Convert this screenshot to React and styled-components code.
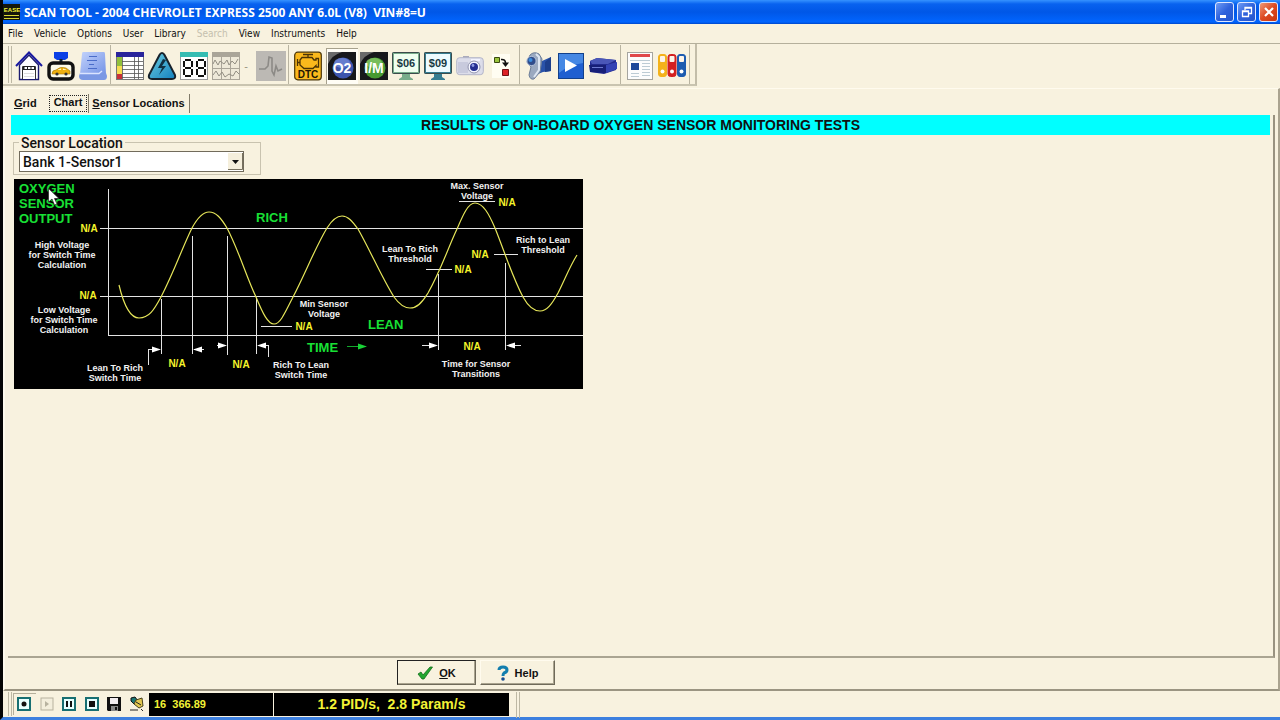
import styled, { createGlobalStyle } from "styled-components";

const menus = ["File", "Vehicle", "Options", "User", "Library", "Search", "View", "Instruments", "Help"];

const HouseIcon = () => (
  <svg width="28" height="30" viewBox="0 0 28 30">
    <path d="M4.5 14V28.5H23.5V14L14 4Z" fill="#fff" stroke="#1c1c70" strokeWidth="1.4" />
    <path d="M1 15L14 1.5L27 15" fill="none" stroke="#1a1aa0" strokeWidth="2" />
    <path d="M7.5 28V15.5H20.5V28" fill="#fff" stroke="#333" />
    <path d="M8 15H20V19H8Z" fill="#222" />
    <path d="M9.5 16H12V18H9.5ZM13 16H15.5V18H13ZM16.5 16H19V18H16.5Z" fill="#fff" />
    <path d="M9 22.5H19M9 25.5H19" stroke="#ddd" />
  </svg>
);

const VehicleIcon = () => (
  <svg width="28" height="30" viewBox="0 0 28 30">
    <path d="M7 1H21V7L18 9H10L7 7Z" fill="#0a3fe6" />
    <path d="M14 8V12" stroke="#123" strokeWidth="3" />
    <rect x="2" y="12" width="24" height="16" rx="4" fill="#fdfbea" stroke="#111" strokeWidth="3.4" />
    <path d="M5 23Q5 19 9 19Q13 15 19 17L23 20V23Z" fill="#eeb010" stroke="#a07000" strokeWidth="0.6" />
    <path d="M11 18.5L14 17.4V19H11M16 17.4L19 18.5V19H16Z" fill="#fff5c0" />
    <circle cx="10" cy="23" r="1.6" fill="#333" />
    <circle cx="19" cy="23" r="1.6" fill="#333" />
  </svg>
);

const NotesIcon = () => (
  <svg width="28" height="30" viewBox="0 0 28 30">
    <defs>
      <linearGradient id="notes" x1="0" y1="0" x2="1" y2="1">
        <stop offset="0" stopColor="#c3d3fb" />
        <stop offset="1" stopColor="#7593e6" />
      </linearGradient>
    </defs>
    <path d="M4 1H25Q26 1 26 3L27 23H1L3 3Q3 1 4 1Z" fill="url(#notes)" />
    <path d="M1 22H27L28 25Q28 29 25 29H4Q0 29 0 25Z" fill="#7b98e4" />
    <path d="M1 22.5H20L23 20" fill="none" stroke="#dbe4ff" strokeWidth="1.4" />
    <path d="M10 5.5H18M8 9.5H18M10 13.5H15M9 17.5H18" stroke="#4a6cc9" />
  </svg>
);

const TableIcon = () => (
  <svg width="28" height="28" viewBox="0 0 28 28">
    <path d="M0 0H28V28H0Z" fill="#fff" />
    <path d="M0 5H6V14H0Z" fill="#91c03c" />
    <path d="M0 14H6V22H0Z" fill="#f5dc51" />
    <path d="M0 22H6V28H0Z" fill="#c83138" />
    <path d="M6.5 5V28M18.5 5V28M22.5 5V28M6 9.5H28M6 13.5H28M6 17.5H28M6 21.5H28M6 25.5H28" stroke="#555" strokeWidth="0.8" />
    <rect x="0.5" y="0.5" width="27" height="27" fill="none" stroke="#777" />
    <path d="M0 0H28V5H0Z" fill="#29249b" />
  </svg>
);

const PowerIcon = () => (
  <svg width="30" height="30" viewBox="0 0 30 30">
    <defs>
      <linearGradient id="power" x1="0" y1="0" x2="1" y2="1">
        <stop offset="0" stopColor="#6dcde0" />
        <stop offset="1" stopColor="#1380bd" />
      </linearGradient>
    </defs>
    <path d="M15 2Q16.5 2 17.5 4L28 24Q29 28 25 28H5Q1 28 2 24L12.5 4Q13.5 2 15 2Z" fill="url(#power)" stroke="#17222c" strokeWidth="2" />
    <path d="M16 8L11 17H15L12 24L19 15H15L19 9Z" fill="#102f42" />
  </svg>
);

const DigitsIcon = () => (
  <svg width="28" height="28" viewBox="0 0 28 28">
    <rect x="0.5" y="0.5" width="27" height="27" fill="#fff" stroke="#999" />
    <path d="M0 0H28V5H0Z" fill="#35bcb2" />
    <g fill="none" stroke="#111" strokeWidth="2">
      <path d="M5 8H11M5 16H11M5 24H11M4 9V15M12 9V15M4 17V23M12 17V23" />
      <path d="M18 8H24M18 16H24M18 24H24M17 9V15M25 9V15M17 17V23M25 17V23" />
    </g>
  </svg>
);

const GraphsIcon = () => (
  <svg width="28" height="28" viewBox="0 0 28 28">
    <rect x="0.5" y="0.5" width="27" height="27" fill="#eee9d9" stroke="#aaa599" />
    <path d="M0 0H28V5H0Z" fill="#aaa599" />
    <path d="M9.5 4V28M18.5 4V28M0 16.5H28" stroke="#aaa599" />
    <path d="M1 12L3 8L6 13L8 9L12 12L15 8L17 13L20 9L23 12L26 7M1 23L4 19L7 24L10 20L13 25L17 22L21 24L24 19L27 22" fill="none" stroke="#928e83" />
  </svg>
);

const PulseIcon = () => (
  <svg width="30" height="30" viewBox="0 0 30 30">
    <path d="M0 0H30V30H0Z" fill="#bcb9b4" />
    <path d="M3 18H9L12 15L13 6L16 7V20L18 24L20 15L22 20L26 18" fill="none" stroke="#8c8a86" strokeWidth="1.6" />
  </svg>
);

const DtcIcon = () => (
  <svg width="28" height="30" viewBox="0 0 28 30">
    <rect x="0.7" y="1.2" width="26.6" height="27.6" rx="3" fill="#fbb91c" stroke="#493407" strokeWidth="1.2" />
    <path d="M9 3.5H19M14 3.5V6M3.5 8V15M3.5 11.5H6M8 6.5H18L20 9H22V7.5H24.5V16H22V14.5L19 17.5H10L6 14V9Z" fill="none" stroke="#4b3305" strokeWidth="1.3" />
    <text x="14" y="27" textAnchor="middle" fontFamily="Liberation Sans, sans-serif" fontWeight="700" fontSize="10" fill="#201505">DTC</text>
  </svg>
);

const BadgeIcon = ({ label, color, light }) => (
  <svg width="28" height="28" viewBox="0 0 28 28">
    <path d="M0 0H28V28H0Z" fill="#17181b" />
    <path d="M0 0H14Q4 3 0 12Z" fill="#6a6a6a" />
    <circle cx="15" cy="16" r="10.5" fill={color} />
    <ellipse cx="14" cy="11" rx="8" ry="5" fill={light} opacity="0.5" />
    <text x="14" y="21" textAnchor="middle" fontFamily="Liberation Sans, sans-serif" fontWeight="700" fontSize="14" fill="#fff">{label}</text>
  </svg>
);

const MonitorIcon = ({ label, color, screen }) => (
  <svg width="28" height="28" viewBox="0 0 28 28">
    <path d="M10 22H18V25L21 27V28H7V27L10 25Z" fill={color} />
    <rect x="1" y="1" width="26" height="20" rx="1" fill={screen} stroke={color} strokeWidth="2" />
    <rect x="0.5" y="0.5" width="27" height="21" rx="1" fill="none" stroke="#3b4c4c" />
    <text x="14" y="15" textAnchor="middle" fontFamily="Liberation Sans, sans-serif" fontWeight="700" fontSize="11" fill="#183943">{label}</text>
  </svg>
);

const CameraIcon = () => (
  <svg width="28" height="28" viewBox="0 0 28 28">
    <path d="M7 6V4H13V6" fill="#aab" />
    <rect x="0.7" y="5.7" width="26.6" height="17" rx="3" fill="#dcddea" stroke="#b3b5c8" />
    <path d="M2 10H12V21H2Z" fill="#c8cadd" />
    <path d="M15 7H24V9H15Z" fill="#f3f4ff" />
    <circle cx="18" cy="15" r="6" fill="#f5f6ff" stroke="#9294ae" />
    <circle cx="18" cy="15" r="4" fill="#252f91" />
    <circle cx="17" cy="13.5" r="1.4" fill="#8e9be4" />
  </svg>
);

const FlowIcon = () => (
  <svg width="28" height="28" viewBox="0 0 28 28">
    <path d="M4 2H22V26H4Z" fill="#fffdf2" />
    <path d="M6.5 5.5H11.5V10.5H6.5Z" fill="#9ac43d" stroke="#3a4a10" />
    <path d="M14.5 17.5H20.5V23.5H14.5Z" fill="#dd2227" stroke="#701216" />
    <path d="M13 7.5Q17.5 7 17.5 11" fill="none" stroke="#111" strokeWidth="1.6" />
    <path d="M14 10.5H21L17.5 15Z" fill="#111" />
  </svg>
);

const VideoIcon = () => (
  <svg width="28" height="28" viewBox="0 0 28 28">
    <path d="M13 8L17 9L26 5V19L18 20L13 22Z" fill="#2952a9" />
    <path d="M26 5L20 10V20L26 19Z" fill="#1d3f8c" />
    <path d="M5 3Q9 -1 14 2L17 7L15 20L9 27Q5 28 4 23L6 15L2 10Z" fill="#9aa9c0" stroke="#6c7d97" />
    <path d="M11 2L14 5V18L9 25" fill="none" stroke="#dde6f2" strokeWidth="2" />
    <circle cx="6.5" cy="9" r="4.6" fill="#304c8a" stroke="#b4c2da" />
    <circle cx="5.5" cy="8" r="2" fill="#3b8ddf" />
  </svg>
);

const PlayIcon = () => (
  <svg width="26" height="26" viewBox="0 0 26 26">
    <rect x="0.5" y="0.5" width="25" height="25" fill="#1f5fd0" stroke="#12408b" />
    <path d="M1 1H25V10Q10 12 1 20Z" fill="#4688e4" />
    <path d="M7 6L19 12.5L7 19Z" fill="#fff" />
  </svg>
);

const DeviceIcon = () => (
  <svg width="30" height="22" viewBox="0 0 30 22">
    <path d="M2 6L9 3L28 5V15L16 19L2 17Z" fill="#232b8e" />
    <path d="M2 6L9 3L28 5L20 9L4 9Z" fill="#4a57b8" />
    <path d="M1 10L18 10V18L2 17Z" fill="#171f77" />
    <path d="M18 10L29 7V14L18 18Z" fill="#3443b4" />
    <path d="M4 12.5H15" stroke="#6c79d0" />
  </svg>
);

const NewsIcon = () => (
  <svg width="28" height="30" viewBox="0 0 28 30">
    <rect x="1.5" y="1.5" width="25" height="27" fill="#fcfcfc" stroke="#a5a5a0" />
    <path d="M4 3H24V6H4Z" fill="#e0484b" />
    <path d="M5 12H13V19H5Z" fill="#1c479a" />
    <path d="M4 9.5H24M16 12.5H24M16 15.5H24M16 18.5H24M5 22.5H13M5 25.5H13M16 21.5H24M16 24.5H24" stroke="#bccbd4" />
  </svg>
);

const BindersIcon = () => (
  <svg width="28" height="28" viewBox="0 0 28 28">
    {["#f4b21b", "#d32021", "#1d5cb0"].map((color, i) => (
      <g key={color} transform={`translate(${i * 9.5} 0)`}>
        <rect x="0.5" y="2.5" width="8" height="22" rx="2.5" fill={color} stroke={color} />
        <rect x="2" y="4" width="5" height="6" rx="1" fill="#fdf4e8" />
        <circle cx="4.5" cy="19.5" r="2" fill="#fff" />
      </g>
    ))}
  </svg>
);

const toolGroups = [
  [
    { name: "Home", icon: <HouseIcon /> },
    { name: "Select vehicle", icon: <VehicleIcon /> },
    { name: "Notes", icon: <NotesIcon /> },
  ],
  [
    { name: "Data grid", icon: <TableIcon /> },
    { name: "Power", icon: <PowerIcon /> },
    { name: "Digital", icon: <DigitsIcon /> },
    { name: "Graphs", icon: <GraphsIcon />, more: true },
    { name: "Pulse", icon: <PulseIcon /> },
  ],
  [
    { name: "Trouble codes", icon: <DtcIcon /> },
    { name: "Oxygen sensors", icon: <BadgeIcon label="O2" color="#3c55ae" light="#8da5ed" />, on: true },
    { name: "Readiness", icon: <BadgeIcon label="I/M" color="#479a31" light="#a8df84" /> },
    { name: "Mode 06", icon: <MonitorIcon label="$06" color="#78ad8b" screen="#effff0" /> },
    { name: "Mode 09", icon: <MonitorIcon label="$09" color="#367d91" screen="#edfbff" /> },
    { name: "Snapshot", icon: <CameraIcon /> },
    { name: "Flow", icon: <FlowIcon /> },
  ],
  [
    { name: "Record movie", icon: <VideoIcon /> },
    { name: "Play movie", icon: <PlayIcon /> },
    { name: "Interface", icon: <DeviceIcon /> },
  ],
  [
    { name: "Report", icon: <NewsIcon /> },
    { name: "Library", icon: <BindersIcon /> },
  ],
];

const recorder = [
  { name: "Record", shape: <circle cx="7" cy="7" r="2.5" />, on: true },
  { name: "Play", shape: <path d="M5 4L9 7L5 10Z" />, off: true },
  { name: "Pause", shape: <path d="M4 4H6V10H4ZM8 4H10V10H8Z" /> },
  { name: "Stop", shape: <path d="M4 4H10V10H4Z" /> },
];

// chart captions: [x centre, first baseline, lines]
const captions = [
  [62, 248, ["High Voltage", "for Switch Time", "Calculation"]],
  [64, 313, ["Low Voltage", "for Switch Time", "Calculation"]],
  [115, 371, ["Lean To Rich", "Switch Time"]],
  [301, 368, ["Rich To Lean", "Switch Time"]],
  [324, 307, ["Min Sensor", "Voltage"]],
  [410, 252, ["Lean To Rich", "Threshold"]],
  [477, 189, ["Max. Sensor", "Voltage"]],
  [543, 243, ["Rich to Lean", "Threshold"]],
  [476, 367, ["Time for Sensor", "Transitions"]],
];

const readings = [
  [89, 232], [88, 299], [177, 367], [241, 368], [304, 330],
  [463, 273], [480, 258], [507, 206], [472, 350],
];

const SensorChart = () => (
  <Chart viewBox="14 179 569 210" role="img" aria-label="Oxygen sensor output">
    <g stroke="#e4e4e4" fill="none" shapeRendering="crispEdges">
      <path d="M108.5 189V335.5H583M100 228.5H583M100 296.5H583" />
      <path d="M161.5 299V354M192.5 236V354M227.5 236V355M256.5 299V354M438.5 274V350M505.5 263V350" />
      <path d="M261 326.5H292M459 201.5H495M426 269.5H452M494 254.5H518" />
      <path d="M148.5 365V349.5H155M194 349.5H204M217 345.5H224M268.5 357V345.5H262M422 345.5H434M510 345.5H521" />
    </g>
    <g fill="#fff">
      <path d="M161 349.5L152 346.5V352.5ZM193 349.5L202 346.5V352.5ZM227 345.5L218 342.5V348.5ZM257 345.5L266 342.5V348.5ZM438 345.5L429 342.5V348.5ZM506 345.5L515 342.5V348.5Z" />
    </g>
    <path
      d="M119 285C124 306 130 318 139 318C149 318 154 310 161 297C174 272 183 246 192 228C198 217 203 212 209 212C216 212 221 218 227 228C239 251 246 276 256 297C263 314 268 324 274 324C280 324 284 315 293 297C305 274 316 246 327 228C332 220 336 216 342 216C348 216 352 221 358 229C371 252 382 278 394 297C399 304 404 308 410 308C417 308 422 303 428 293C441 270 448 248 457 229C463 215 468 203 475 203C483 203 489 214 495 228C505 253 512 276 523 297C528 306 534 311 540 311C547 311 552 304 558 293C565 279 570 266 577 255"
      fill="none"
      stroke="#e6e65a"
      strokeWidth="1.2"
    />
    <path d="M347 346.5H360" stroke="#12a92c" />
    <path d="M367 346.5L358 343.5V349.5Z" fill="#19d237" />
    <Zone>
      <text x="19" y="193">OXYGEN</text>
      <text x="19" y="208">SENSOR</text>
      <text x="19" y="223">OUTPUT</text>
      <text x="256" y="222">RICH</text>
      <text x="368" y="329">LEAN</text>
      <text x="307" y="352">TIME</text>
    </Zone>
    {captions.map(([x, y, lines]) => (
      <Caption key={`${x}-${y}`}>
        {lines.map((line, i) => (
          <text key={line} x={x} y={y + i * 10}>{line}</text>
        ))}
      </Caption>
    ))}
    <Reading>
      {readings.map(([x, y]) => (
        <text key={`${x}-${y}`} x={x} y={y}>N/A</text>
      ))}
    </Reading>
  </Chart>
);

const App = () => (
  <>
    <GlobalStyle />
    <Window>
      <TitleBar>
        <svg width="18" height="18" viewBox="0 0 18 18">
          <path d="M0 1H17V17H0Z" fill="#15170c" />
          <text x="9" y="9" textAnchor="middle" fontFamily="Liberation Sans, sans-serif" fontWeight="700" fontSize="6" fill="#f4f43b">EASE</text>
          <path d="M1 12.5H16M1 15.5H16" stroke="#d8d832" />
        </svg>
        <Title>SCAN TOOL - 2004 CHEVROLET EXPRESS 2500 ANY 6.0L (V8)&nbsp; VIN#8=U</Title>
        <WindowButton aria-label="Minimize">
          <svg width="18" height="18"><path d="M4 12H10V15H4Z" fill="#fff" /></svg>
        </WindowButton>
        <WindowButton aria-label="Restore">
          <svg width="18" height="18"><path d="M7 7V4.5H13.5V10.5H11M4.5 8H10.5V13.5H4.5ZM4 8.5H11M7 5H14" fill="none" stroke="#fff" strokeWidth="1.3" /></svg>
        </WindowButton>
        <WindowButton $close aria-label="Close">
          <svg width="18" height="18"><path d="M5 5L13 13M13 5L5 13" stroke="#fff" strokeWidth="2.2" /></svg>
        </WindowButton>
      </TitleBar>
      <MenuBar>
        {menus.map((menu) => (
          <MenuItem key={menu} disabled={menu === "Search"}>{menu}</MenuItem>
        ))}
      </MenuBar>
      <ToolBar>
        <Grip />
        {toolGroups.map((group, i) => (
          <ToolGroup key={i}>
            {group.map((tool) => (
              <ToolSlot key={tool.name}>
                <ToolButton aria-label={tool.name} $on={tool.on}>{tool.icon}</ToolButton>
                {tool.more && <MoreButton aria-label="More graphs">-</MoreButton>}
              </ToolSlot>
            ))}
          </ToolGroup>
        ))}
      </ToolBar>
      <Workspace>
        <Tabs role="tablist">
          <Tab role="tab"><u>G</u>rid</Tab>
          <Tab role="tab" $active aria-selected="true"><span>Chart</span></Tab>
          <Tab role="tab" $edge><u>S</u>ensor Locations</Tab>
        </Tabs>
        <TabPage>
          <Heading>RESULTS OF ON-BOARD OXYGEN SENSOR MONITORING TESTS</Heading>
          <Location>
            <LocationLabel htmlFor="location">Sensor Location</LocationLabel>
            <SelectBox>
              <Select id="location" defaultValue="Bank 1-Sensor1">
                <option>Bank 1-Sensor1</option>
              </Select>
              <DropArrow viewBox="0 0 15 17">
                <path d="M0 0H15V17H0Z" fill="#f5efdc" />
                <path d="M14.5 0V16.5H0" fill="none" stroke="#77715f" />
                <path d="M4 7H11L7.5 11Z" fill="#111" />
              </DropArrow>
            </SelectBox>
          </Location>
          <ChartFrame>
            <SensorChart />
            <Pointer viewBox="0 0 12 19">
              <path d="M0.5 0.5V14L4 11L6.5 17L9 16L6.5 10.5H11Z" fill="#fff" stroke="#222" strokeWidth="0.7" />
            </Pointer>
          </ChartFrame>
        </TabPage>
        <Actions>
          <ActionButton $primary>
            <svg width="16" height="14" viewBox="0 0 16 14">
              <path d="M1 8L4 6L6 9L13 1L15.5 1L7 13H5Z" fill="#22a72f" stroke="#126c1d" strokeWidth="0.8" />
            </svg>
            <span><u>O</u>K</span>
          </ActionButton>
          <ActionButton>
            <svg width="12" height="16" viewBox="0 0 12 16">
              <path d="M2 5Q2 2 6 2Q10 2 10 5Q10 7 7 8Q6 9 6 11" fill="none" stroke="#137eae" strokeWidth="3" />
              <circle cx="6" cy="14" r="1.8" fill="#174d91" />
            </svg>
            <span>Help</span>
          </ActionButton>
        </Actions>
      </Workspace>
      <StatusBar>
        <Grip />
        <RecorderGroup>
          {recorder.map((item) => (
            <RecorderButton key={item.name} aria-label={item.name} disabled={item.off} $on={item.on}>
              <svg width="14" height="14" viewBox="0 0 14 14">
                <rect x="1" y="1" width="12" height="12" fill={item.off ? "#f3eedc" : "#e8ffff"} stroke={item.off ? "#b7b29f" : "#176f72"} strokeWidth={item.off ? 1 : 2} />
                <g fill={item.off ? "#b7b29f" : "#111"}>{item.shape}</g>
              </svg>
            </RecorderButton>
          ))}
          <RecorderButton aria-label="Save">
            <svg width="14" height="14" viewBox="0 0 14 14">
              <path d="M0 0H14V14H1L0 13Z" fill="#111" />
              <path d="M3 1H11V7H3Z" fill="#f2edf0" />
              <path d="M4 9H11V14H4Z" fill="#888" />
              <path d="M8 10H10V13H8Z" fill="#111" />
            </svg>
          </RecorderButton>
          <RecorderButton aria-label="Clear">
            <svg width="16" height="16" viewBox="0 0 16 16">
              <path d="M2 2L6 1L9 5L5 8L2 5Z" fill="#1b7775" stroke="#111" />
              <path d="M7 4L13 2L14 10L10 12L5 8Z" fill="#e2c84f" stroke="#46401b" />
              <path d="M1 14H9M12 13L14 15M7 6L12 9" stroke="#222" />
            </svg>
          </RecorderButton>
        </RecorderGroup>
        <Readout $width={124}>16&nbsp; 366.89</Readout>
        <Readout $width={235} $center>1.2 PID/s,&nbsp; 2.8 Param/s</Readout>
        <Grip $end />
      </StatusBar>
    </Window>
  </>
);

export default App;

const GlobalStyle = createGlobalStyle`
  * {
    box-sizing: border-box;
  }
  body {
    margin: 0;
    background: #f8f2df;
    color: #111;
    font-family: "Liberation Sans", Arial, sans-serif;
    font-size: 11px;
  }
  button {
    padding: 0;
    border: none;
    background: none;
    color: inherit;
    font: inherit;
  }
  svg {
    display: block;
    flex: none;
  }
`;
const Window = styled.div`
  display: flex;
  flex-direction: column;
  min-height: 100vh;
  border-left: 3px solid #050505;
  border-bottom: 3px solid #3d80df;
`;
const TitleBar = styled.header`
  display: flex;
  align-items: center;
  gap: 3px;
  height: 24px;
  padding-right: 2px;
  background: linear-gradient(#3592ff 0, #0862ef 4px, #0057e7 12px, #0165ff 22px, #0047c8 24px);
`;
const Title = styled.h1`
  flex: 1;
  margin: 0;
  color: #fff;
  font-family: "Noto Sans", sans-serif;
  font-size: 12px;
  font-weight: 700;
  white-space: nowrap;
`;
const WindowButton = styled.button`
  display: flex;
  align-items: center;
  justify-content: center;
  width: 19px;
  height: 20px;
  border: 1px solid #dfe8ff;
  border-radius: 3px;
  background: ${({ $close }) =>
    $close ? "linear-gradient(135deg, #f09a78, #dd4a22 50%, #c9370f)" : "linear-gradient(135deg, #6f9cf5, #2f62dc 50%, #2455cc)"};
`;
const MenuBar = styled.nav`
  display: flex;
  align-items: center;
  gap: 11px;
  height: 20px;
  padding-left: 5px;
  border-bottom: 1px solid #b5b09c;
`;
const MenuItem = styled.button`
  font-family: "DejaVu Sans Condensed", "Liberation Sans", sans-serif;
  font-size: 10px;

  &:disabled {
    color: #c5c0ae;
  }
`;
const ToolBar = styled.div`
  display: flex;
  align-items: center;
  align-self: flex-start;
  height: 42px;
  padding: 1px 5px 0;
  border-right: 2px solid #c3bda9;
  border-bottom: 2px solid #c9c4b0;
`;
const Grip = styled.div`
  width: 4px;
  height: ${({ $end }) => ($end ? "26px" : "auto")};
  align-self: stretch;
  margin: 1px ${({ $end }) => ($end ? "6px" : "0")};
  border-left: 1px solid #bdb8a4;
  border-right: 1px solid #bdb8a4;
`;
const ToolGroup = styled.div`
  display: flex;
  align-self: stretch;
  align-items: center;
  padding: 2px 1px 0;
  border-right: 1px solid #b9b4a1;

  & + & {
    margin-left: 2px;
  }
`;
const ToolSlot = styled.div`
  display: flex;
  align-items: center;
`;
const ToolButton = styled.button`
  display: flex;
  align-items: center;
  justify-content: center;
  width: 32px;
  height: 36px;
  margin-left: ${({ $on }) => ($on ? "2px" : "0")};
  background: ${({ $on }) => ($on ? "#fffdf5" : "none")};
  box-shadow: ${({ $on }) => ($on ? "inset 1px 1px #a7a18d" : "none")};
`;
const MoreButton = styled.button`
  width: 13px;
  padding-right: 5px;
  color: #999480;
`;
const Workspace = styled.main`
  display: flex;
  flex-direction: column;
  flex: 1;
  margin-top: 2px;
  border-top: 1px solid #fffbee;
  border-right: 2px solid #aaa38f;
  border-bottom: 2px solid #9b9582;
  border-left: 2px solid #fdf9ec;
`;
const Tabs = styled.div`
  display: flex;
  align-items: center;
  height: 26px;
  padding: 2px 0 0 3px;
`;
const Tab = styled.button`
  height: 19px;
  padding: ${({ $active, $edge }) => ($active ? "0 1px 0 6px" : $edge ? "0 4px 0 3px" : "0 6px")};
  border-right: ${({ $active, $edge }) => ($active || $edge ? "1px solid #807a68" : "none")};
  font-weight: 700;
  white-space: nowrap;

  span {
    display: block;
    padding: 0 4px 3px;
    border: 1px dotted #222;
  }
`;
const TabPage = styled.section`
  flex: 1;
  margin: 0 3px;
  padding: 0 3px;
  border-right: 2px solid #999280;
  border-bottom: 2px solid #aaa592;
`;
const Heading = styled.h2`
  height: 20px;
  margin: 0;
  background: #00ffff;
  font-size: 14px;
  font-weight: 700;
  line-height: 20px;
  text-align: center;
`;
const Location = styled.div`
  position: relative;
  width: 248px;
  height: 33px;
  margin: 7px 0 0 2px;
  padding: 8px 5px 0;
  border: 1px solid #c9c3af;
`;
const LocationLabel = styled.label`
  position: absolute;
  top: -8px;
  left: 5px;
  padding: 0 2px;
  background: #f8f2df;
  font-family: Roboto, sans-serif;
  font-size: 14px;
  font-weight: 500;
  line-height: 16px;
`;
const SelectBox = styled.div`
  position: relative;
  width: 225px;
`;
const Select = styled.select`
  display: block;
  width: 100%;
  height: 21px;
  padding: 0 20px 0 3px;
  border: 1px solid #716b5b;
  border-radius: 0;
  background: #fff;
  color: #111;
  font-family: Roboto, sans-serif;
  font-size: 14px;
  font-weight: 500;
  appearance: none;
`;
const DropArrow = styled.svg`
  position: absolute;
  top: 2px;
  right: 1px;
  width: 15px;
  height: 17px;
  pointer-events: none;
`;
const ChartFrame = styled.div`
  position: relative;
  width: 569px;
  margin: 4px 0 0 3px;
`;
const Chart = styled.svg`
  width: 100%;
  background: #000;
`;
const Zone = styled.g`
  fill: #18e035;
  font-size: 13px;
  font-weight: 700;
`;
const Caption = styled.g`
  fill: #f2f2f2;
  font-size: 9px;
  font-weight: 700;
  text-anchor: middle;
`;
const Reading = styled.g`
  fill: #f4f42b;
  font-size: 10px;
  font-weight: 700;
  text-anchor: middle;
`;
const Pointer = styled.svg`
  position: absolute;
  top: 9px;
  left: 34px;
  width: 12px;
  height: 19px;
`;
const Actions = styled.div`
  display: flex;
  gap: 4px;
  height: 31px;
  margin: 0 3px;
  padding: 2px 0 0 389px;
`;
const ActionButton = styled.button`
  display: flex;
  align-items: center;
  justify-content: center;
  gap: 6px;
  width: ${({ $primary }) => ($primary ? "79px" : "75px")};
  height: 25px;
  border: 1px solid ${({ $primary }) => ($primary ? "#222" : "#fffbee")};
  border-right-color: #6f6a5a;
  border-bottom-color: #6f6a5a;
  box-shadow: inset -1px -1px #aaa48f;
  font-weight: 700;
`;
const StatusBar = styled.footer`
  display: flex;
  align-items: center;
  height: 26px;
  padding-left: 5px;
`;
const RecorderGroup = styled.div`
  display: flex;
  width: 137px;
  padding: 0 1px;
`;
const RecorderButton = styled.button`
  display: flex;
  flex: 1;
  align-items: center;
  justify-content: center;
  height: 22px;
  box-shadow: ${({ $on }) => ($on ? "inset 1px 1px #b5af9b" : "none")};
`;
const Readout = styled.output`
  width: ${({ $width }) => $width}px;
  height: 23px;
  margin-right: 1px;
  padding: 0 5px;
  background: #000;
  color: #f2f236;
  font-size: ${({ $center }) => ($center ? "14px" : "11px")};
  font-weight: 700;
  line-height: 23px;
  text-align: ${({ $center }) => ($center ? "center" : "left")};
`;
